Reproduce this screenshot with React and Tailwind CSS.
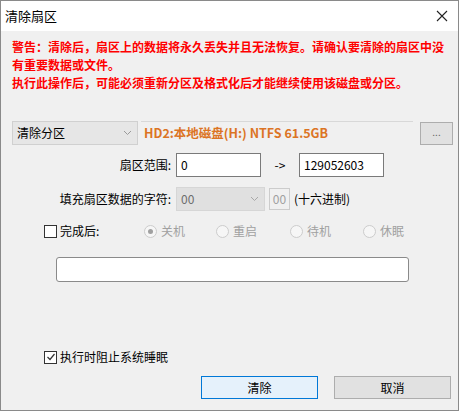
import React from 'react';

const font = { fontFamily: '"Noto Sans CJK SC", "Liberation Sans", sans-serif' };

function Radio({ label, checked }) {
  return (
    <label className="flex items-center gap-1 text-[#a0a0a0]">
      <span className="w-[13px] h-[13px] rounded-full border border-[#cccccc] bg-[#f6f6f6] flex items-center justify-center">
        {checked && <span className="w-[5px] h-[5px] rounded-full bg-[#a0a0a0]" />}
      </span>
      {label}
    </label>
  );
}

function Chevron({ color = '#808080' }) {
  return (
    <svg width="9" height="6" viewBox="0 0 9 6">
      <path d="M1 1 L4.5 4.5 L8 1" fill="none" stroke={color} strokeWidth="1" />
    </svg>
  );
}

export default function App() {
  return (
    <div className="w-[465px] h-[412px] bg-white" style={font}>
      <div className="w-[459px] h-[411px] border border-[#8a8a8a] bg-[#f0f0f0] flex flex-col text-[12px] text-black">
        {/* title bar */}
        <div className="h-[30px] bg-white flex items-center justify-between pl-[4px] pr-[10px] shrink-0">
          <span className="text-[13px]">清除扇区</span>
          <svg width="12" height="12" viewBox="0 0 12 12">
            <path d="M1 1 L11 11 M11 1 L1 11" stroke="#222" strokeWidth="1.1" />
          </svg>
        </div>

        {/* warning */}
        <div className="pl-[11px] pr-[8px] pt-[7px] font-bold text-[#ff0000] leading-[18px] text-[12px]">
          <p>警告：清除后，扇区上的数据将永久丢失并且无法恢复。请确认要清除的扇区中没有重要数据或文件。</p>
          <p>执行此操作后，可能必须重新分区及格式化后才能继续使用该磁盘或分区。</p>
        </div>

        {/* target row */}
        <div className="mt-[29px] ml-[11px] flex items-center gap-[3px] h-[24px]">
          <div className="w-[126px] h-[24px] border border-[#d0d0d0] bg-[#e6e6e6] flex items-center justify-between pl-[4px] pr-[5px]">
            <span>清除分区</span>
            <Chevron color="#9a9a9a" />
          </div>
          <div className="w-[272px] h-[24px] border-t border-[#d8d8d8] bg-[#f0f0f0] flex items-center pl-[3px] font-bold text-[#dc7424] text-[12.5px]">
            HD2:本地磁盘(H:) NTFS 61.5GB
          </div>
          <div className="ml-[4px] w-[33px] h-[23px] border border-[#adadad] bg-[#e1e1e1] flex items-center justify-center text-[10px] text-[#666] pb-[4px]">
            ...
          </div>
        </div>

        {/* range row */}
        <div className="mt-[8px] flex items-center h-[24px]">
          <span className="w-[172px] text-right pr-[2px]">扇区范围:</span>
          <div className="ml-[3px] w-[85px] h-[24px] border border-[#7a7a7a] bg-white flex items-center pl-[4px]">0</div>
          <span className="w-[38px] text-center">-&gt;</span>
          <div className="w-[85px] h-[24px] border border-[#7a7a7a] bg-white flex items-center pl-[4px]">129052603</div>
        </div>

        {/* fill row */}
        <div className="mt-[10px] flex items-center h-[24px]">
          <span className="w-[172px] text-right pr-[2px]">填充扇区数据的字符:</span>
          <div className="ml-[3px] w-[89px] h-[24px] border border-[#d6d6d6] bg-[#e0e0e0] flex items-center justify-between pl-[4px] pr-[5px] text-[#6d6d6d]">
            <span>00</span>
            <Chevron color="#a8a8a8" />
          </div>
          <div className="ml-[4px] w-[21px] h-[22px] border border-[#cccccc] bg-[#f0f0f0] flex items-center justify-center text-[#a0a0a0]">00</div>
          <span className="ml-[4px]">(十六进制)</span>
        </div>

        {/* after completion */}
        <div className="mt-[10px] ml-[43px] flex items-center h-[20px]">
          <label className="flex items-center gap-[3px] w-[100px]">
            <span className="w-[13px] h-[13px] border border-[#333] bg-white" />
            完成后:
          </label>
          <div className="w-[72px]"><Radio label="关机" checked /></div>
          <div className="w-[74px]"><Radio label="重启" /></div>
          <div className="w-[73px]"><Radio label="待机" /></div>
          <div><Radio label="休眠" /></div>
        </div>

        {/* progress box */}
        <div className="mt-[16px] ml-[55px] w-[353px] h-[25px] border border-[#8a8a8a] rounded-[3px] bg-white" />

        {/* prevent sleep */}
        <div className="mt-[65px] ml-[43px] flex items-center gap-[3px] h-[20px]">
          <span className="w-[13px] h-[13px] border border-[#333] bg-white flex items-center justify-center">
            <svg width="10" height="10" viewBox="0 0 10 10">
              <path d="M1.5 5 L4 7.5 L8.5 2" fill="none" stroke="#333" strokeWidth="1.2" />
            </svg>
          </span>
          执行时阻止系统睡眠
        </div>

        {/* buttons */}
        <div className="mt-[9px] flex items-center gap-[16px] ml-[200px]">
          <button className="w-[117px] h-[23px] border border-[#0078d7] bg-[#e5f1fb] text-[12px]">清除</button>
          <button className="w-[117px] h-[23px] border border-[#adadad] bg-[#e1e1e1] text-[12px]">取消</button>
        </div>
      </div>
    </div>
  );
}
